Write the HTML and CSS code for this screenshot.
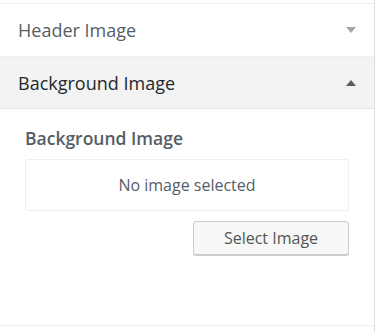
FILE: index.html
```
<!DOCTYPE html>
<html lang="en">
<head>
    <meta charset="UTF-8">
    <title>Customizer</title>
    <link rel="stylesheet" href="styles.css">
</head>
<body>
    <div class="sidebar">
        <div class="section-top"></div>

        <div class="accordion-title">
            <span>Header Image</span>
            <span class="arrow down"></span>
        </div>

        <div class="accordion-title open">
            <span>Background Image</span>
            <span class="arrow up"></span>
        </div>

        <div class="accordion-content">
            <h3>Background Image</h3>
            <div class="placeholder">No image selected</div>
            <div class="actions">
                <button type="button">Select Image</button>
            </div>
        </div>
    </div>
</body>
</html>
```

FILE: styles.css
```
* {
    box-sizing: border-box;
    margin: 0;
    padding: 0;
}

body {
    font-family: 'Open Sans', sans-serif;
    background: #fff;
    color: #555d66;
}

.sidebar {
    width: 375px;
    height: 332px;
    border-right: 1px solid #ddd;
}

.section-top {
    height: 4px;
    border-bottom: 1px solid #eee;
}

.accordion-title {
    display: flex;
    align-items: center;
    justify-content: space-between;
    height: 53px;
    padding: 0 18px;
    border-bottom: 1px solid #eee;
    font-size: 18px;
    color: #555d66;
}

.accordion-title.open {
    height: 52px;
    background: #f3f3f3;
    color: #23282d;
    border-bottom: 1px solid #e5e5e5;
}

.arrow {
    width: 0;
    height: 0;
    border-left: 5px solid transparent;
    border-right: 5px solid transparent;
}

.arrow.down {
    border-top: 6px solid #a0a5aa;
}

.arrow.up {
    border-bottom: 6px solid #555d66;
}

.accordion-content {
    padding: 17px 25px 0;
    height: 217px;
    border-bottom: 1px solid #eee;
}

.accordion-content h3 {
    font-size: 17.5px;
    font-weight: 600;
    color: #555d66;
    line-height: 24px;
    margin-bottom: 9px;
}

.placeholder {
    height: 52px;
    border: 1px solid #eee;
    border-radius: 2px;
    display: flex;
    align-items: center;
    justify-content: center;
    font-size: 16px;
    color: #555d66;
}

.actions {
    display: flex;
    justify-content: flex-end;
    margin-top: 10px;
}

button {
    width: 156px;
    height: 34px;
    border: 1px solid #ccc;
    border-radius: 3px;
    background: #f7f7f7;
    box-shadow: 0 1px 0 #ccc;
    font-family: 'Open Sans', sans-serif;
    font-size: 16px;
    color: #555;
}
```
